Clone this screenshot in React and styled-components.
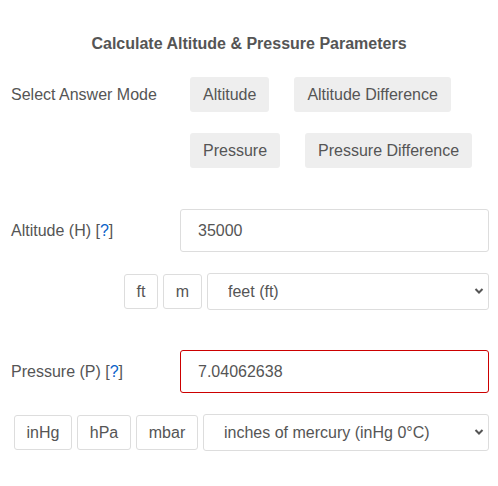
import React, { useState } from 'react';
import styled, { createGlobalStyle } from 'styled-components';

const GlobalStyle = createGlobalStyle`
  body {
    margin: 0;
    background: #fff;
    font-family: "Liberation Sans", Arial, sans-serif;
    color: #555;
  }
`;

const Page = styled.div`
  width: 498px;
  padding: 35px 9px 0 0;
  box-sizing: border-box;
`;

const Title = styled.h2`
  margin: 0 0 24px 9px;
  font-size: 16px;
  line-height: 18px;
  font-weight: bold;
  text-align: center;
  color: #555;
`;

const Row = styled.div`
  display: flex;
  align-items: ${(p) => (p.$top ? 'flex-start' : 'center')};
  margin-top: ${(p) => p.$mt || 0}px;
`;

const Label = styled.div`
  width: 180px;
  flex: none;
  box-sizing: border-box;
  padding-left: 11px;
  font-size: 16px;
  line-height: ${(p) => p.$lh || 20}px;
`;

const Help = styled.a`
  color: #0a62c9;
  text-decoration: none;
`;

const ModeGroup = styled.div`
  display: flex;
  flex-wrap: wrap;
  column-gap: 25px;
  row-gap: 21px;
  margin-left: 10px;
  flex: 1;
`;

const ModeButton = styled.button`
  height: 35px;
  padding: 0 13px;
  border: none;
  border-radius: 3px;
  background: #eee;
  color: #555;
  font-family: inherit;
  font-size: 16px;
  cursor: pointer;
`;

const Input = styled.input`
  flex: 1;
  min-width: 0;
  height: 43px;
  box-sizing: border-box;
  padding: 0 17px;
  border: 1px solid ${(p) => (p.$error ? '#cc0000' : '#ddd')};
  border-radius: 3px;
  font-family: inherit;
  font-size: 16px;
  color: #555;
  outline: none;
`;

const UnitRow = styled.div`
  display: flex;
  justify-content: flex-end;
  align-items: center;
  gap: 5px;
  margin-top: 21px;
`;

const UnitButton = styled.button`
  width: ${(p) => p.$w}px;
  height: 35px;
  padding: 0;
  box-sizing: border-box;
  background: #fff;
  border: 1px solid #ddd;
  border-radius: 3px;
  color: #555;
  font-family: inherit;
  font-size: 16px;
  cursor: pointer;
`;

const SelectWrap = styled.div`
  position: relative;
  width: ${(p) => p.$w}px;
`;

const Select = styled.select`
  appearance: none;
  width: 100%;
  height: 37px;
  box-sizing: border-box;
  padding: 0 30px 0 20px;
  background: #fff;
  border: 1px solid #ddd;
  border-radius: 3px;
  color: #555;
  font-family: inherit;
  font-size: 16px;
  outline: none;
`;

const Chevron = styled.svg`
  position: absolute;
  right: 5px;
  top: 14px;
  pointer-events: none;
`;

function UnitSelect({ width, value, options, onChange }) {
  return (
    <SelectWrap $w={width}>
      <Select value={value} onChange={(e) => onChange(e.target.value)}>
        {options.map((o) => (
          <option key={o} value={o}>{o}</option>
        ))}
      </Select>
      <Chevron width="10" height="8" viewBox="0 0 10 8">
        <path d="M1.5 2 L5 5.5 L8.5 2" fill="none" stroke="#555" strokeWidth="2" />
      </Chevron>
    </SelectWrap>
  );
}

const altUnits = ['feet (ft)', 'meters (m)'];
const presUnits = ['inches of mercury (inHg 0°C)', 'hectopascals (hPa)', 'millibars (mbar)'];

export default function App() {
  const [mode, setMode] = useState('Pressure');
  const [altitude, setAltitude] = useState('35000');
  const [pressure, setPressure] = useState('7.04062638');
  const [altUnit, setAltUnit] = useState(altUnits[0]);
  const [presUnit, setPresUnit] = useState(presUnits[0]);

  return (
    <Page>
      <GlobalStyle />
      <Title>Calculate Altitude &amp; Pressure Parameters</Title>

      <Row $top>
        <Label $lh={35}>Select Answer Mode</Label>
        <ModeGroup>
          {['Altitude', 'Altitude Difference', 'Pressure', 'Pressure Difference'].map((m) => (
            <ModeButton key={m} onClick={() => setMode(m)}>{m}</ModeButton>
          ))}
        </ModeGroup>
      </Row>

      <Row $mt={41}>
        <Label>Altitude (H) [<Help href="#">?</Help>]</Label>
        <Input value={altitude} onChange={(e) => setAltitude(e.target.value)} />
      </Row>
      <UnitRow>
        <UnitButton $w={34} onClick={() => setAltUnit(altUnits[0])}>ft</UnitButton>
        <UnitButton $w={39} onClick={() => setAltUnit(altUnits[1])}>m</UnitButton>
        <UnitSelect width={282} value={altUnit} options={altUnits} onChange={setAltUnit} />
      </UnitRow>

      <Row $mt={40}>
        <Label>Pressure (P) [<Help href="#">?</Help>]</Label>
        <Input $error value={pressure} onChange={(e) => setPressure(e.target.value)} />
      </Row>
      <UnitRow>
        <UnitButton $w={58} onClick={() => setPresUnit(presUnits[0])}>inHg</UnitButton>
        <UnitButton $w={54} onClick={() => setPresUnit(presUnits[1])}>hPa</UnitButton>
        <UnitButton $w={62} onClick={() => setPresUnit(presUnits[2])}>mbar</UnitButton>
        <UnitSelect width={286} value={presUnit} options={presUnits} onChange={setPresUnit} />
      </UnitRow>
    </Page>
  );
}
